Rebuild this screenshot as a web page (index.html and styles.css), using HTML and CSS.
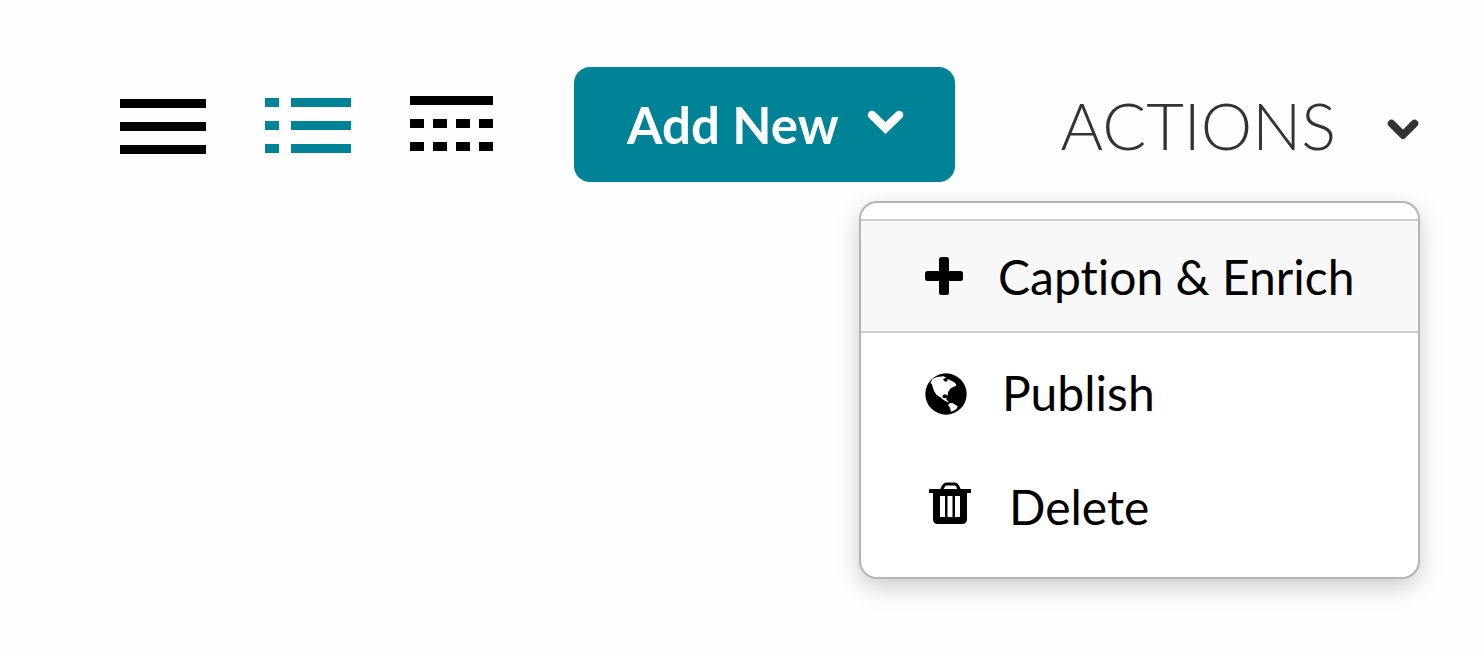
FILE: index.html
```
<!DOCTYPE html>
<html lang="en">
<head>
    <meta charset="UTF-8">
    <title>Media Library</title>
    <link rel="stylesheet" href="styles.css">
</head>
<body>
    <div class="toolbar">
        <div class="views">
            <button class="view" type="button" aria-label="Compact view">
                <svg width="88" height="60" viewBox="0 0 88 60"><path d="M1 4h86v9H1zM1 27h86v9H1zM1 50h86v9H1z"/></svg>
            </button>
            <button class="view active" type="button" aria-label="List view">
                <svg width="88" height="60" viewBox="0 0 88 60"><path d="M1 3h14v9H1zM27 3h60v9H27zM1 26h14v9H1zM27 26h60v9H27zM1 49h14v9H1zM27 49h60v9H27z"/></svg>
            </button>
            <button class="view" type="button" aria-label="Grid view">
                <svg width="88" height="60" viewBox="0 0 88 60"><path d="M1 1h83v9H1zM1 24h14v9H1zM24 24h14v9H24zM47 24h14v9H47zM70 24h14v9H70zM1 47h14v9H1zM24 47h14v9H24zM47 47h14v9H47zM70 47h14v9H70z"/></svg>
            </button>
        </div>
        <button class="add-new" type="button">
            Add New
            <svg class="chevron" width="37" height="30" viewBox="0 0 37 30"><path d="M5 5l13.500 13L32 5" stroke-width="8.500"/></svg>
        </button>
        <div class="dropdown">
            <button class="actions" type="button" aria-expanded="true">
                ACTIONS
                <svg class="chevron" width="33" height="28" viewBox="0 0 33 28"><path d="M4.500 12.500L16 24l11.500-11.500" stroke-width="7.500"/></svg>
            </button>
            <ul class="menu">
                <li>
                    <button class="item selected" type="button">
                        <svg width="38" height="38" viewBox="0 0 38 38"><rect x="14" width="10" height="38" rx="2.500"/><rect y="14" width="38" height="10" rx="2.500"/></svg>
                        Caption &amp; Enrich
                    </button>
                </li>
                <li>
                    <button class="item" type="button">
                        <svg width="42" height="45" viewBox="9 -1 126 135">
                            <circle cx="72" cy="71" r="62"/>
                            <path class="land" d="M25 38l7-13 13-5 20-2 8 4-10 4 3 5 6 4 4-4 1-5 8 4 12 6 7 9-10 5-8 4-4 6-4 6-1 10-7-4-8 2v8l6 2 6-2-1 6 7 6-2 2-12-6-12-10-10-6-8-12-4-12-2-8z"/>
                            <path class="land" d="M84 98l9 1 14 9-3 7-9 6-8 3-3-12-6-8z"/>
                        </svg>
                        Publish
                    </button>
                </li>
                <li>
                    <button class="item" type="button">
                        <svg width="49" height="48" viewBox="0 0 49 48">
                            <path d="M4 7h42v4H4zM8 9h34v28q0 5-5 5H13q-5 0-5-5z"/>
                            <path class="handle" d="M16.500 8l2-4q1-2 3-2h8q2 0 3 2l2 4"/>
                            <path class="slots" d="M15 14h5v21h-5zM22.500 14h5v21h-5zM30 14h5v21h-5z"/>
                        </svg>
                        Delete
                    </button>
                </li>
            </ul>
        </div>
    </div>
</body>
</html>
```
FILE: styles.css
```
* {
    box-sizing: border-box;
}
body {
    min-height: 100vh;
    margin: 0;
    background: #fefefe;
    color: #000;
    font-family: Lato, sans-serif;
    font-variant-ligatures: none;
}
button {
    margin: 0;
    padding: 0;
    border: 0;
    background: none;
    color: inherit;
    font: inherit;
    font-variant-ligatures: none;
    cursor: pointer;
}
svg {
    display: block;
    flex: none;
    fill: currentColor;
}
.toolbar {
    display: flex;
    align-items: center;
    justify-content: flex-end;
    padding: 67px 63px 0;
}
.views {
    display: flex;
    gap: 57px;
    margin-right: 77px;
}
.view.active {
    color: #008397;
}
.chevron {
    fill: none;
    stroke: currentColor;
    stroke-linecap: round;
}
.add-new {
    display: flex;
    align-items: center;
    gap: 28px;
    height: 115px;
    padding: 0 51px 0 53px;
    border-radius: 16px;
    background: #008397;
    color: #fff;
    font-size: 51px;
    font-weight: 700;
    white-space: nowrap;
}
.dropdown {
    position: relative;
    margin-left: 106px;
}
.actions {
    display: flex;
    align-items: center;
    gap: 51px;
    height: 115px;
    color: #333;
    font-size: 65px;
    font-weight: 300;
}
.menu {
    position: absolute;
    z-index: 10;
    top: 134px;
    right: 0;
    width: 561px;
    margin: 0;
    padding: 16px 0 14px;
    list-style: none;
    border: 2px solid #b5b5b5;
    border-radius: 18px;
    background: #fff;
    box-shadow: 0 8px 24px rgba(0, 0, 0, 0.2);
}
.item {
    display: flex;
    align-items: center;
    gap: 35px;
    width: 100%;
    height: 114px;
    padding: 0 64px;
    font-size: 48px;
    text-align: left;
    white-space: nowrap;
}
.item.selected {
    margin-bottom: 2px;
    border-top: 2px solid #ccc;
    border-bottom: 2px solid #ccc;
    background: #f8f8f8;
}
.land, .slots {
    fill: #fff;
}
.handle {
    fill: none;
    stroke: currentColor;
    stroke-width: 3;
}
```
